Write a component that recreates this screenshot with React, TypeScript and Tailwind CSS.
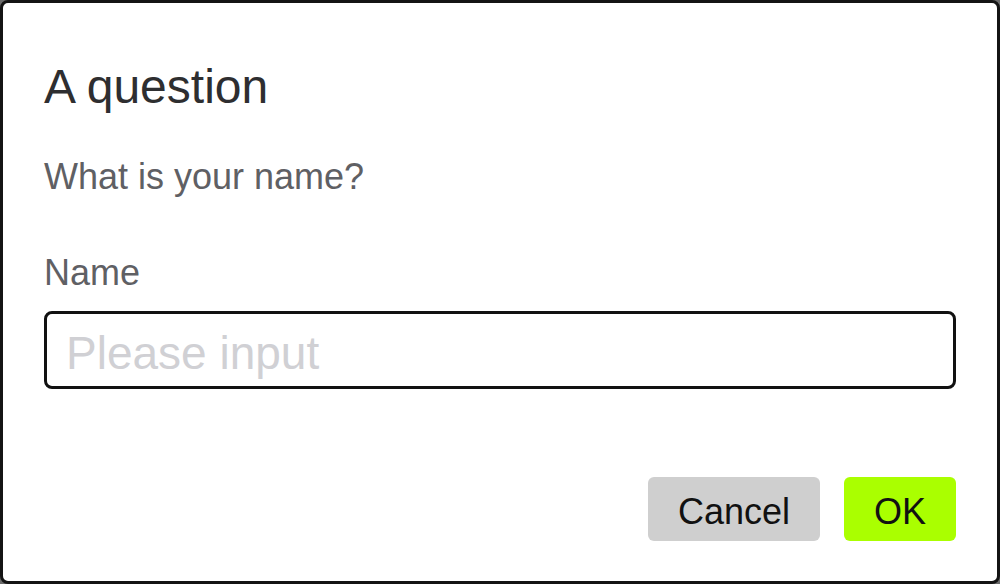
import { useState } from 'react';

export default function App() {
  const [name, setName] = useState('');

  return (
    <div className="h-[584px] w-[1000px] bg-[#6b6b6b] font-['Liberation_Sans',Helvetica,Arial,sans-serif]">
      <div className="flex h-full w-full flex-col rounded-[8px] border-[3px] border-[#141414] bg-white px-[41px] pt-[57px] pb-[40px]">
        <h1 className="text-[48px] leading-[53px] font-normal text-[#2e2e30]">A question</h1>

        <p className="mt-[43px] text-[36px] leading-[42px] text-[#5f6064]">What is your name?</p>

        <label htmlFor="name" className="mt-[54px] text-[36px] leading-[42px] text-[#5f6064]">
          Name
        </label>

        <input
          id="name"
          value={name}
          onChange={(e) => setName(e.target.value)}
          placeholder="Please input"
          className="mt-[17px] h-[78px] w-full rounded-[8px] border-[3px] border-[#111] px-[19px] pt-[6px] text-[46px] text-[#222] outline-none placeholder:text-[#d0d0d4]"
        />

        <div className="mt-auto flex justify-end gap-[24px]">
          <button className="h-[64px] w-[172px] rounded-[6px] bg-[#cfcfcf] pt-[6px] text-[36px] text-[#111]">
            Cancel
          </button>
          <button className="h-[64px] w-[112px] rounded-[6px] bg-[#aaff00] pt-[6px] text-[36px] text-[#111]">
            OK
          </button>
        </div>
      </div>
    </div>
  );
}
